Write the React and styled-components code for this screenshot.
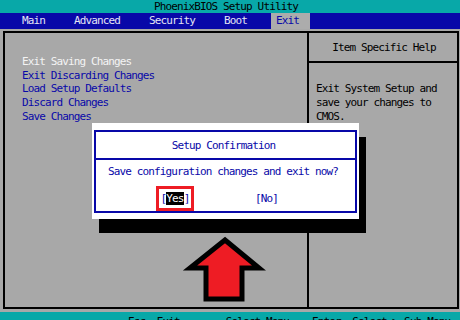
import React from "react";
import styled, { createGlobalStyle } from "styled-components";

const GlobalStyle = createGlobalStyle`
  html, body { margin: 0; padding: 0; background: #a8a8a8; overflow: hidden; }
  * { box-sizing: border-box; }
`;

const mono = `font-family: "DejaVu Sans Mono", "Liberation Mono", monospace; font-size: 11px; letter-spacing: -0.87px;`;

const Screen = styled.div`
  position: relative;
  width: 460px;
  height: 320px;
  display: flex;
  flex-direction: column;
  background: #a8a8a8;
  overflow: hidden;
  ${mono}
`;

const TitleBar = styled.div`
  height: 13px;
  background: #08a8a8;
  color: #000;
  text-align: center;
  line-height: 14px;
  padding-right: 8px;
`;

const MenuBar = styled.div`
  height: 16px;
  background: #0808a8;
  display: flex;
  align-items: stretch;
  padding-left: 17px;
  gap: 19px;
`;

const Tab = styled.div`
  padding: ${(p) => (p.$active ? "0 11px 0 5px" : "0 5px")};
  line-height: 16px;
  color: ${(p) => (p.$active ? "#0808a8" : "#e4e4f4")};
  background: ${(p) => (p.$active ? "#acacac" : "transparent")};
`;

const Body = styled.div`
  flex: 1;
  padding: 2px 1px 3px 3px;
  display: flex;
  flex-direction: column;
`;

const Frame = styled.div`
  height: 278px;
  border: 2px solid #000;
  display: grid;
  grid-template-columns: 302px 1fr;
`;

const LeftPanel = styled.div`
  padding: 22px 0 0 17px;
  display: flex;
  flex-direction: column;
`;

const Item = styled.div`
  line-height: 13.7px;
  color: ${(p) => (p.$selected ? "#f4f4f4" : "#0808a8")};
`;

const RightPanel = styled.div`
  border-left: 2px solid #000;
  display: flex;
  flex-direction: column;
`;

const HelpHeader = styled.div`
  height: 30px;
  border-bottom: 2px solid #000;
  display: flex;
  align-items: center;
  justify-content: center;
  color: #000;
  padding-left: 2px;
`;

const HelpText = styled.div`
  padding: 19px 0 0 7px;
  line-height: 14px;
  color: #000;
`;

const BottomBar = styled.div`
  height: 8px;
  background: #08a8a8;
  overflow: hidden;
  padding: 4px 0 0 128px;
  line-height: 12px;
  color: #000;
  white-space: pre;
`;

const Dialog = styled.div`
  position: absolute;
  left: 92px;
  top: 123px;
  width: 267px;
  height: 96px;
  background: #fff;
  box-shadow: 7px 14px 0 #000;
  padding: 7px 2px 6px 2px;
`;

const DialogInner = styled.div`
  height: 100%;
  border: 2px solid #0808a8;
  display: flex;
  flex-direction: column;
`;

const DialogTitle = styled.div`
  height: 28px;
  border-bottom: 2px solid #0808a8;
  display: flex;
  align-items: center;
  justify-content: center;
  color: #0808a8;
  padding-right: 4px;
`;

const Message = styled.div`
  padding: 5px 0 0 12px;
  line-height: 14px;
  color: #0808a8;
`;

const Buttons = styled.div`
  display: flex;
  align-items: center;
  padding: 7px 0 0 60px;
`;

const Highlight = styled.div`
  border: 3px solid #ee1c24;
  height: 25px;
  width: 38px;
  display: flex;
  align-items: center;
  justify-content: center;
`;

const Btn = styled.span`
  color: #0808a8;
  line-height: 14px;
  margin-left: ${(p) => p.$ml || 0}px;
`;

const Sel = styled.span`
  background: #000;
  color: #fff;
`;

const Arrow = styled.svg`
  position: absolute;
  left: 0;
  top: 0;
  pointer-events: none;
`;

export default function App() {
  return (
    <>
      <GlobalStyle />
      <Screen>
        <TitleBar>PhoenixBIOS Setup Utility</TitleBar>
        <MenuBar>
          <Tab>Main</Tab>
          <Tab>Advanced</Tab>
          <Tab>Security</Tab>
          <Tab>Boot</Tab>
          <Tab $active>Exit</Tab>
        </MenuBar>
        <Body>
          <Frame>
            <LeftPanel>
              <Item $selected>Exit Saving Changes</Item>
              <Item>Exit Discarding Changes</Item>
              <Item>Load Setup Defaults</Item>
              <Item>Discard Changes</Item>
              <Item>Save Changes</Item>
            </LeftPanel>
            <RightPanel>
              <HelpHeader>Item Specific Help</HelpHeader>
              <HelpText>
                Exit System Setup and
                <br />
                save your changes to
                <br />
                CMOS.
              </HelpText>
            </RightPanel>
          </Frame>
        </Body>
        <BottomBar>{"Esc  Exit    \u2190\u2192  Select Menu    Enter  Select \u25B6 Sub-Menu"}</BottomBar>

        <Dialog>
          <DialogInner>
            <DialogTitle>Setup Confirmation</DialogTitle>
            <Message>Save configuration changes and exit now?</Message>
            <Buttons>
              <Highlight>
                <Btn>
                  [<Sel>Yes</Sel>]
                </Btn>
              </Highlight>
              <Btn $ml={61}>[No]</Btn>
            </Buttons>
          </DialogInner>
        </Dialog>

        <Arrow width="460" height="320" viewBox="0 0 460 320">
          <polygon
            points="225,240 259,268 242,268 242,299 206,299 206,268 190,268"
            fill="#ee1c24"
            stroke="#000"
            strokeWidth="5"
            strokeLinejoin="miter"
          />
        </Arrow>
      </Screen>
    </>
  );
}
